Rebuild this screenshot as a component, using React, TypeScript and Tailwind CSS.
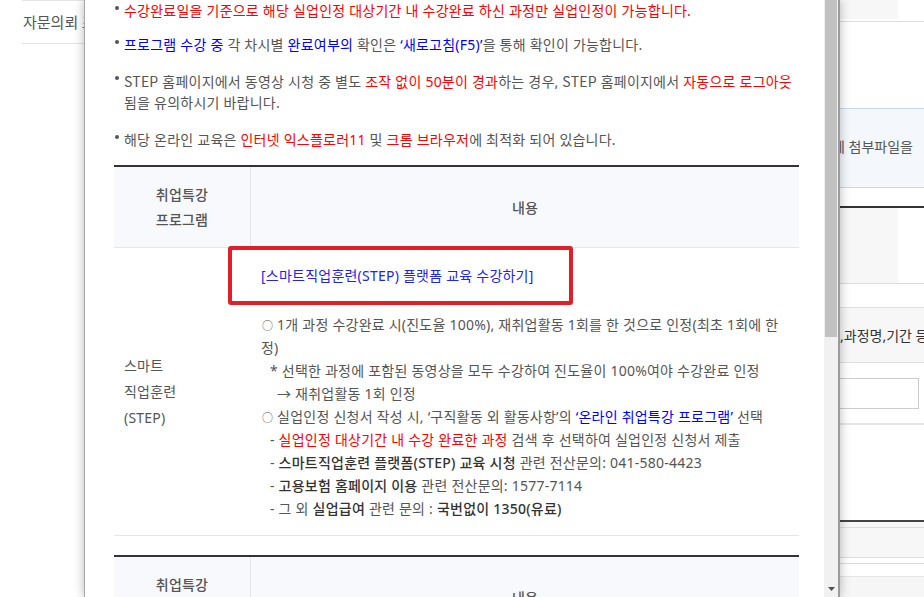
import React from 'react';

type Tone = 'red' | 'blue' | 'bold' | 'mark' | 'narrow';
type Seg = { t: string; c?: Tone };

const toneClass: Record<Tone, string> = {
  red: 'text-[#ff0000]',
  blue: 'text-[#0000ff]',
  bold: 'font-medium text-[#333333]',
  mark: 'text-[11px] leading-none font-["Noto_Sans_CJK_KR"]',
  narrow: 'font-["Noto_Sans_CJK_KR"]',
};

const notices: { lines: Seg[][]; gap: string }[] = [
  {
    gap: 'mb-[12px]',
    lines: [[{ t: '수강완료일을 기준으로 해당 실업인정 대상기간 내 수강완료 하신 과정만 실업인정이 가능합니다.', c: 'red' }]],
  },
  {
    gap: 'mb-[14px]',
    lines: [
      [
        { t: '프로그램 수강 중', c: 'blue' },
        { t: ' 각 차시별 ' },
        { t: '완료여부의', c: 'blue' },
        { t: ' 확인은 ' },
        { t: '‘새로고침(F5)’', c: 'blue' },
        { t: '을 통해 확인이 가능합니다.' },
      ],
    ],
  },
  {
    gap: 'mb-[15px]',
    lines: [
      [
        { t: 'STEP', c: 'narrow' },
        { t: ' 홈페이지에서 동영상 시청 중 별도 ' },
        { t: '조작 없이 50분이 경과', c: 'red' },
        { t: '하는 경우, ' },
        { t: 'STEP', c: 'narrow' },
        { t: ' 홈페이지에서 ' },
        { t: '자동으로 로그아웃', c: 'red' },
      ],
      [{ t: '됨을 유의하시기 바랍니다.' }],
    ],
  },
  {
    gap: 'mb-0',
    lines: [
      [
        { t: '해당 온라인 교육은 ' },
        { t: '인터넷 익스플로러11', c: 'red' },
        { t: ' 및 ' },
        { t: '크롬 브라우저', c: 'red' },
        { t: '에 최적화 되어 있습니다.' },
      ],
    ],
  },
];

// lines of the STEP row, broken where the original page breaks them
const steps: { pl: string; segs: Seg[] }[] = [
  {
    pl: 'pl-[1px]',
    segs: [{ t: '○', c: 'mark' }, { t: ' 1개 과정 수강완료 시(진도율 100%), 재취업활동 1회를 한 것으로 인정(최초 1회에 한' }],
  },
  { pl: 'pl-0', segs: [{ t: '정)' }] },
  { pl: 'pl-[9px]', segs: [{ t: '* 선택한 과정에 포함된 동영상을 모두 수강하여 진도율이 100%여야 수강완료 인정' }] },
  { pl: 'pl-[16px]', segs: [{ t: '→ 재취업활동 1회 인정' }] },
  {
    pl: 'pl-[1px]',
    segs: [
      { t: '○', c: 'mark' },
      { t: ' 실업인정 신청서 작성 시, ‘구직활동 외 활동사항’의 ' },
      { t: '‘온라인 취업특강 프로그램’', c: 'blue' },
      { t: ' 선택' },
    ],
  },
  {
    pl: 'pl-[9px]',
    segs: [
      { t: '- ' },
      { t: '실업인정 대상기간 내 수강 완료한 과정', c: 'red' },
      { t: ' 검색 후 선택하여 실업인정 신청서 제출' },
    ],
  },
  {
    pl: 'pl-[9px]',
    segs: [
      { t: '- ' },
      { t: '스마트직업훈련 플랫폼(STEP) 교육 시청', c: 'bold' },
      { t: ' 관련 전산문의: 041-580-4423' },
    ],
  },
  {
    pl: 'pl-[9px]',
    segs: [{ t: '- ' }, { t: '고용보험 홈페이지 이용', c: 'bold' }, { t: ' 관련 전산문의: 1577-7114' }],
  },
  {
    pl: 'pl-[9px]',
    segs: [
      { t: '- 그 외 ' },
      { t: '실업급여', c: 'bold' },
      { t: ' 관련 문의 : ' },
      { t: '국번없이 1350(유료)', c: 'bold' },
    ],
  },
];

const Segs = ({ segs }: { segs: Seg[] }) => (
  <>
    {segs.map((s, i) => (
      <span key={i} className={s.c ? toneClass[s.c] : undefined}>
        {s.t}
      </span>
    ))}
  </>
);

const TableHead = () => (
  <div className="grid h-[81px] grid-cols-[137px_1fr] border-b border-[#e6e6e6] bg-[#f8f9fc] font-medium">
    <div className="flex flex-col items-center justify-center border-r border-[#e6e6e6] leading-[25px]">
      <span>취업특강</span>
      <span>프로그램</span>
    </div>
    <div className="flex items-center justify-center">내용</div>
  </div>
);

const LeftPage = () => (
  <div className="w-[84px] shrink-0 overflow-hidden pl-[22px]">
    <div className="flex h-[44px] items-center whitespace-nowrap border-y border-[#e3e3e3] pl-[1px] text-[15px] text-[#555555]">
      자문의뢰 조회
    </div>
  </div>
);

const RightPage = () => (
  <div className="w-[84px] shrink-0 overflow-hidden bg-white text-[14px]">
    <div className="flex h-[22px] border-b border-[#dddddd]">
      <div className="h-[19px] w-[58px] bg-[#f7f7f7]" />
    </div>
    <div className="h-[86px]" />
    <div className="flex h-[80px] items-center whitespace-nowrap border-y border-[#c6d9e9] bg-[#f4f8fc] pb-[4px] text-[#555555]">
      <span className="ml-[-8px]">에 첨부파일을</span>
    </div>
    <div className="h-[18px]" />
    <div className="flex h-[78px] border-y border-t-2 border-b-[#dddddd] border-t-[#333333]">
      <div className="w-[58px] bg-[#f7f7f7]" />
    </div>
    <div className="h-[23px]" />
    <div className="flex h-[56px] items-center whitespace-nowrap border-y border-[#e0e0e0] bg-[#f7f7f7] text-[#333333]">
      ,과정명,기간 등
    </div>
    <div className="flex h-[60px] items-center">
      <div className="ml-[-20px] h-[31px] w-[99px] shrink-0 border border-[#cccccc] bg-white" />
    </div>
    <div className="h-[97px] border-t-2 border-[#e6e6e6]" />
    <div className="h-[7px] border-t-2 border-[#444444] bg-[#f7f7f7]" />
    <div className="h-[31px] border-y border-[#dddddd] bg-[#f7f7f7]" />
    <div className="h-[6px] border-b border-[#dddddd]" />
    <div className="h-[12px]" />
    <div className="h-[40px] border-t border-[#e5e5e5] bg-[#f6f6f6]" />
  </div>
);

const Scrollbar = () => (
  <div className="relative w-[14px] shrink-0 bg-[#f1f1f1]">
    <div className="mx-[1px] h-[337px] bg-[#c1c1c1]" />
    <svg className="absolute bottom-[6px] left-[4px]" width="7" height="4" viewBox="0 0 7 4">
      <path d="M0 0h7L3.5 4z" fill="#505050" />
    </svg>
  </div>
);

const Popup = () => (
  <div className="relative z-10 flex h-[597px] w-[756px] shrink-0 border-l border-r-2 border-l-[#a6a6a6] border-r-[#9c9c9c] bg-white shadow-[0_0_10px_rgba(0,0,0,0.28)]">
    <div className="w-[739px] shrink-0 overflow-hidden pl-[29px] pr-[25px] text-[14px] tracking-[0.23px] text-[#555555]">
      {notices.map((n, i) => (
        <div key={i} className={`flex leading-[22px] ${n.gap}`}>
          <span className="flex h-[22px] w-[10px] shrink-0 items-start pl-[1px] pt-[6px]">
            <span className="h-[4px] w-[4px] rounded-full bg-[#555555]" />
          </span>
          <div className="whitespace-nowrap">
            {n.lines.map((l, j) => (
              <div key={j} className="h-[22px]">
                <Segs segs={l} />
              </div>
            ))}
          </div>
        </div>
      ))}

      <div className="mt-[14px] border-t-2 border-[#333333]">
        <TableHead />
        <div className="grid grid-cols-[137px_1fr] border-b border-[#e6e6e6]">
          <div className="flex flex-col justify-center pl-[10px] leading-[26px]">
            <span>스마트</span>
            <span>직업훈련</span>
            <span>(STEP)</span>
          </div>
          <div className="relative whitespace-nowrap pb-[15px] pl-[10px] pt-[16px] leading-[23px]">
            <div className="text-[#2424e0]">[스마트직업훈련(STEP) 플랫폼 교육 수강하기]</div>
            <div className="pointer-events-none absolute left-[-23px] top-[-2px] h-[59px] w-[345px] rounded-[3px] border-4 border-[#e21f27]" />
            <div className="mt-[26px]">
              {steps.map((s, i) => (
                <div key={i} className={`h-[23px] ${s.pl}`}>
                  <Segs segs={s.segs} />
                </div>
              ))}
            </div>
          </div>
        </div>
      </div>

      <div className="mt-[19px] border-t-2 border-[#333333]">
        <TableHead />
      </div>
    </div>
    <Scrollbar />
  </div>
);

export default function App() {
  return (
    <div className="flex h-[597px] w-[924px] overflow-hidden bg-white font-['Noto_Sans','Noto_Sans_CJK_KR',sans-serif]">
      <LeftPage />
      <Popup />
      <RightPage />
    </div>
  );
}
